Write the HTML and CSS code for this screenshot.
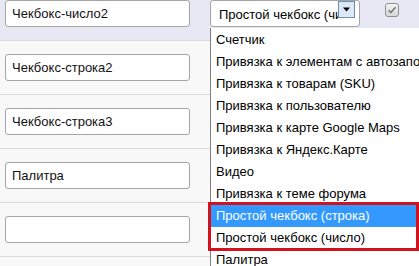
FILE: index.html
```html
<!DOCTYPE html>
<html lang="ru">
<head>
<meta charset="utf-8">
<title>Поля</title>
<link rel="stylesheet" href="styles.css">
</head>
<body>
<div class="table">
  <div class="row row-first">
    <div class="cell-name"><div class="field">Чекбокс-число2</div></div>
    <div class="cell-type">
      <div class="select">
        <span class="select-text">Простой чекбокс (число)</span>
        <span class="select-btn"><svg width="9" height="5" viewBox="0 0 9 5"><path d="M1 0.5h7L4.5 4.5z" fill="#000"/></svg></span>
      </div>
    </div>
    <div class="cell-check">
      <svg class="check" width="14" height="14" viewBox="0 0 14 14"><defs><linearGradient id="g" x1="0" y1="0" x2="0" y2="1"><stop offset="0" stop-color="#f4f4f4"/><stop offset="1" stop-color="#d6d6d6"/></linearGradient></defs><rect x="0.5" y="0.5" width="13" height="13" rx="2.5" fill="url(#g)" stroke="#8e8f8f"/><path d="M3.5 7.2l2.3 2.4 4.7-5.4" fill="none" stroke="#7a7a7a" stroke-width="1.6"/></svg>
    </div>
  </div>
  <div class="row"><div class="cell-name"><div class="field">Чекбокс-строка2</div></div></div>
  <div class="row"><div class="cell-name"><div class="field">Чекбокс-строка3</div></div></div>
  <div class="row"><div class="cell-name"><div class="field">Палитра</div></div></div>
  <div class="row"><div class="cell-name"><div class="field"></div></div></div>
  <div class="row"><div class="cell-name"><div class="field"></div></div></div>
</div>

<ul class="dropdown">
  <li>Счетчик</li>
  <li>Привязка к элементам с автозаполнением</li>
  <li>Привязка к товарам (SKU)</li>
  <li>Привязка к пользователю</li>
  <li>Привязка к карте Google Maps</li>
  <li>Привязка к Яндекс.Карте</li>
  <li>Видео</li>
  <li>Привязка к теме форума</li>
  <li class="active">Простой чекбокс (строка)</li>
  <li>Простой чекбокс (число)</li>
  <li>Палитра</li>
</ul>
<div class="mark"></div>
</body>
</html>
```
FILE: styles.css
```css
html, body {
  margin: 0;
  padding: 0;
  overflow: hidden;
  width: 419px;
  height: 266px;
  background: #f8f8f8;
  font-family: "Liberation Sans", Arial, sans-serif;
  font-size: 13px;
  color: #000;
}
.table {
  display: flex;
  flex-direction: column;
}
.row {
  display: flex;
  align-items: flex-start;
  padding: 13px 0 13px 5px;
  border-bottom: 1px solid #d9d9d9;
  background: #f8f8f8;
  height: 27px;
}
.row-first {
  padding-top: 0;
  background: #e7e8f3;
}
.cell-name {
  width: 205px;
}
.field {
  box-sizing: border-box;
  width: 185px;
  height: 27px;
  border: 1px solid #a5a5a5;
  border-radius: 3px;
  background: #fff;
  padding: 0 6px;
  line-height: 25px;
  color: #111;
  white-space: nowrap;
  overflow: hidden;
}
.cell-type {
  width: 175px;
}
.select {
  box-sizing: border-box;
  width: 150px;
  height: 27px;
  border: 1px solid #a5a5a5;
  border-radius: 3px;
  background: #fff;
  display: flex;
  align-items: flex-start;
  overflow: hidden;
}
.select-text {
  flex: 0 0 127px;
  overflow: hidden;
  white-space: nowrap;
  padding-left: 8px;
  line-height: 27px;
  box-sizing: border-box;
}
.select-btn {
  box-sizing: border-box;
  flex: 0 0 17px;
  height: 17px;
  border: 1px solid #6f8fae;
  background: #dbe8f5;
  display: flex;
  align-items: center;
  justify-content: center;
}
.cell-check {
  padding-top: 3px;
}
.check {
  display: block;
}
.dropdown {
  position: absolute;
  left: 210px;
  top: 28px;
  width: 209px;
  height: 238px;
  overflow: hidden;
  box-sizing: border-box;
  margin: 0;
  padding: 1px 0 0;
  list-style: none;
  background: #fff;
  border-left: 1px solid #7f7f7f;
}
.dropdown li {
  height: 22px;
  line-height: 22px;
  padding-left: 5px;
  white-space: nowrap;
  overflow: hidden;
}
.dropdown li.active {
  background: #3399ff;
  color: #fff;
}
.mark {
  position: absolute;
  left: 208px;
  top: 202px;
  width: 211px;
  height: 49px;
  box-sizing: border-box;
  border: 3px solid #d4121c;
}
```
